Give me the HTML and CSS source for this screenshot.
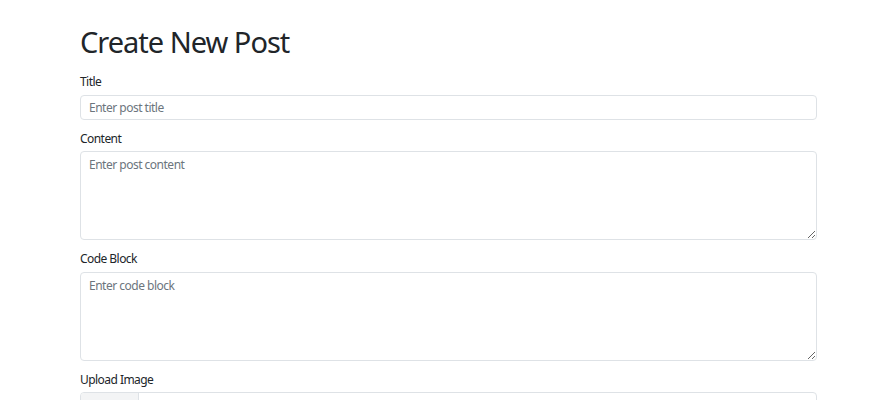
FILE: index.html
```html
<!DOCTYPE html>
<html lang="en">
<head>
  <meta charset="UTF-8">
  <title>Create New Post</title>
  <link rel="stylesheet" href="styles.css">
</head>
<body>
  <div class="container">
    <h1>Create New Post</h1>
    <form>
      <div class="field">
        <label for="title">Title</label>
        <input type="text" id="title" class="control" placeholder="Enter post title">
      </div>
      <div class="field">
        <label for="content">Content</label>
        <textarea id="content" class="control area" placeholder="Enter post content"></textarea>
      </div>
      <div class="field">
        <label for="code">Code Block</label>
        <textarea id="code" class="control area" placeholder="Enter code block"></textarea>
      </div>
      <div class="field">
        <label for="image">Upload Image</label>
        <input type="file" id="image" class="control file">
      </div>
    </form>
  </div>
</body>
</html>
```

FILE: styles.css
```css
body {
  margin: 0;
  font-family: "Noto Sans", "Open Sans", sans-serif;
  color: #212529;
  background-color: #fff;
}

.container {
  width: 737px;
  padding-left: 80px;
}

h1 {
  font-size: 29px;
  font-weight: 400;
  letter-spacing: -1px;
  line-height: 40px;
  margin: 22px 0 9px;
}

.field {
  display: flex;
  flex-direction: column;
  margin-bottom: 8px;
}

label {
  font-size: 12px;
  letter-spacing: -0.55px;
  line-height: 20px;
  margin: 1px 0 2.5px;
}

.control {
  box-sizing: border-box;
  width: 100%;
  height: 25px;
  padding: 3px 8px;
  font-family: inherit;
  font-size: 12px;
  letter-spacing: -0.5px;
  line-height: 17px;
  color: #212529;
  border: 1px solid #dee2e6;
  border-radius: 4px;
  margin: 0;
}

.control::placeholder {
  color: #6c757d;
}

.area {
  height: 89px;
  resize: vertical;
  padding-top: 4px;
}

.file {
  height: 34px;
  padding: 0;
  line-height: 32px;
  overflow: hidden;
}

.file::file-selector-button {
  width: 58px;
  height: 32px;
  padding: 0 6px;
  margin-right: 8px;
  border: 0;
  border-right: 1px solid #dee2e6;
  background-color: #f3f4f5;
  color: #212529;
  font-family: inherit;
  font-size: 12px;
  vertical-align: top;
}
```
